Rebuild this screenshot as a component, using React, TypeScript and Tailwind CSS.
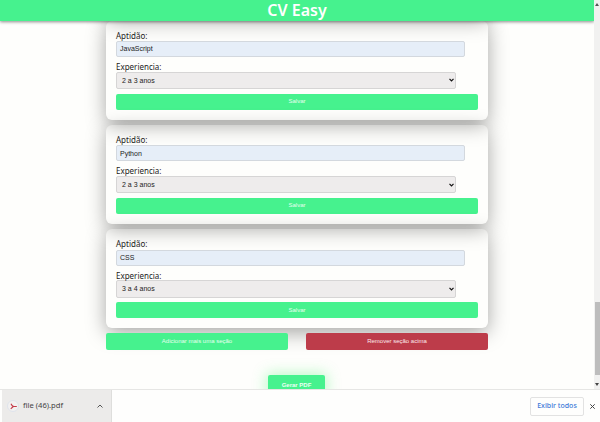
import React from "react";

type Skill = { name: string; time: string };

const skills: Skill[] = [
  { name: "JavaScript", time: "2 a 3 anos" },
  { name: "Python", time: "2 a 3 anos" },
  { name: "CSS", time: "3 a 4 anos" },
];

function SkillCard({ name, time }: Skill) {
  return (
    <section className="h-[99.3px] w-full rounded-[6px] px-[10px] pt-[9px] shadow-[0_5px_20px_rgba(0,0,0,0.35)]">
      <div className="h-[11.5px] font-['Noto_Sans',sans-serif] text-[8px] leading-[12px] text-[#222]">Aptidão:</div>
      <div className="flex h-[16px] w-[348.5px] items-center rounded-[2px] border border-[#d3d8de] bg-[#e6eef8] px-[3px] pt-px text-[7px] text-[#222]">
        {name}
      </div>
      <div className="mt-[4px] h-[10.5px] font-['Noto_Sans',sans-serif] text-[8px] leading-[11px] text-[#222]">Experiencia:</div>
      <div className="flex h-[17.5px] w-[340px] items-center justify-between rounded-[2px] border border-[#d6d5d5] bg-[#eeecec] pr-[1.5px] pl-[5px] text-[7px] text-[#222]">
        <span className="pt-px">{time}</span>
        <svg className="h-[4px] w-[5px]" viewBox="0 0 5 4" fill="none" stroke="#111" strokeWidth="1.2">
          <path d="M.5 .8 2.5 2.8 4.5 .8" />
        </svg>
      </div>
      <div className="mt-[4.5px] flex h-[16px] items-center justify-center rounded-[2px] bg-[#46f28e] text-[6px] text-[#e5ffee]">
        Salvar
      </div>
    </section>
  );
}

export default function App() {
  return (
    <div className="flex h-[422px] w-[600px] flex-col overflow-hidden bg-[#fefefc] font-['Liberation_Sans',Arial,sans-serif]">
      <div className="flex h-[389px] shrink-0">
        <div className="flex w-[594px] flex-col overflow-hidden">
          <header className="z-10 flex h-[21px] shrink-0 items-center justify-center bg-[#46f28e] pb-[2px] font-['Noto_Sans',sans-serif] text-[16px] leading-none font-semibold text-white shadow-[0_1px_3px_rgba(0,0,0,0.45)]">
            <h1>CV Easy</h1>
          </header>
          <main className="-mt-[84px] flex flex-col items-center">
            <div className="flex w-[382px] flex-col gap-[5px]">
              <div className="h-[78.5px] shrink-0 rounded-[6px] shadow-[0_5px_20px_rgba(0,0,0,0.35)]" />
              {skills.map((skill) => (
                <SkillCard key={skill.name} {...skill} />
              ))}
              <div className="flex justify-between text-[6px]">
                <div className="z-10 flex h-[17px] w-[182px] items-center justify-center rounded-[2px] bg-[#46f28e] text-[#e5ffee]">
                  Adicionar mais uma seção
                </div>
                <div className="z-10 flex h-[17px] w-[182px] items-center justify-center rounded-[2px] bg-[#bd3c4a] text-[#fbe9eb]">
                  Remover seção acima
                </div>
              </div>
            </div>
            <div className="mt-[25px] mr-px flex h-[20px] w-[57px] items-center justify-center rounded-[2px] bg-[#46f28e] text-[6px] font-bold text-[#edfff3] shadow-[0_0_14px_2px_rgba(70,242,110,0.35)]">
              Gerar PDF
            </div>
          </main>
        </div>
        <div className="flex w-[6px] flex-col items-center justify-between bg-[#f1f1f0] py-[3px]">
          <svg className="h-[3px] w-[4px]" viewBox="0 0 4 3" fill="#555">
            <path d="M0 3 2 0 4 3Z" />
          </svg>
          <div className="mt-auto mb-[8px] h-[73px] w-[5px] self-end bg-[#bdbdbd]" />
          <svg className="h-[3px] w-[4px]" viewBox="0 0 4 3" fill="#444">
            <path d="M0 0 2 3 4 0Z" />
          </svg>
        </div>
      </div>
      <footer className="z-20 flex h-[33px] items-center justify-between border-t border-[#e6e6e4] bg-[#fefefd] pr-[5px] pl-[2px] font-['Noto_Sans',sans-serif]">
        <div className="flex h-full w-[110px] items-center border-r border-[#dededc] bg-[#ecebea] pr-[8px] pl-[5px]">
          <span className="flex h-[12px] w-[12px] items-center justify-center rounded-full border border-[#dfe4ec] bg-[#f2f1f1]">
            <svg className="h-[7px] w-[7px]" viewBox="0 0 7 7" fill="none" stroke="#c43c4b" strokeWidth="1.1">
              <path d="M1 .8C1.5 2 2.2 3 3.5 3.5L.7 5.8M3.5 3.5H6.8M1.7 4.7 3.7 3.3" />
            </svg>
          </span>
          <span className="ml-[4px] text-[7.6px] text-[#444]">file (46).pdf</span>
          <svg className="ml-auto h-[4px] w-[6px]" viewBox="0 0 6 4" fill="none" stroke="#555" strokeWidth="1">
            <path d="M.5 3.5 3 1 5.5 3.5" />
          </svg>
        </div>
        <div className="flex items-center gap-[6px]">
          <div className="flex h-[19px] w-[54px] items-center justify-center rounded-[2px] border border-[#e2e2e2] text-[7px] font-medium text-[#3c78d8]">
            Exibir todos
          </div>
          <svg className="h-[5px] w-[5px]" viewBox="0 0 5 5" fill="none" stroke="#444" strokeWidth="1">
            <path d="M.3.3 4.7 4.7M4.7.3.3 4.7" />
          </svg>
        </div>
      </footer>
    </div>
  );
}
